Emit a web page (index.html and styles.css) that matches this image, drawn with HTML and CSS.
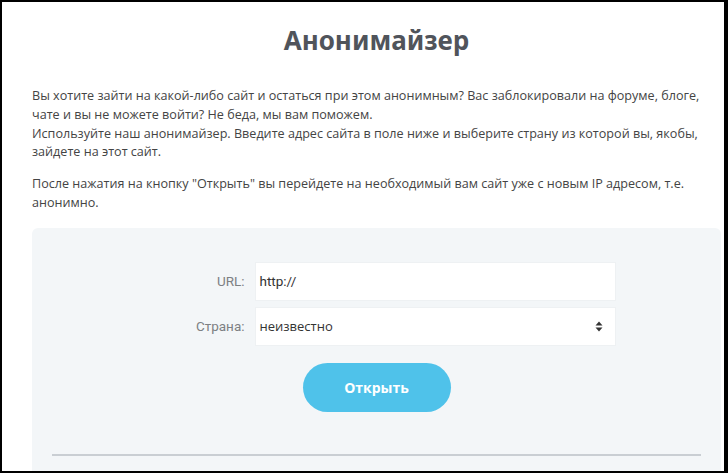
FILE: index.html
```html
<!DOCTYPE html>
<html lang="ru">
<head>
<meta charset="utf-8">
<title>Анонимайзер</title>
<link rel="stylesheet" href="styles.css">
</head>
<body>
<div class="page">
  <h1 class="title">Анонимайзер</h1>
  <div class="intro">
    <p>Вы хотите зайти на какой-либо сайт и остаться при этом анонимным? Вас заблокировали на форуме, блоге,<br>чате и вы не можете войти? Не беда, мы вам поможем.<br>Используйте наш анонимайзер. Введите адрес сайта в поле ниже и выберите страну из которой вы, якобы,<br>зайдете на этот сайт.</p>
    <p>После нажатия на кнопку "Открыть" вы перейдете на необходимый вам сайт уже с новым IP адресом, т.е.<br>анонимно.</p>
  </div>
  <div class="panel">
    <form class="form">
      <div class="row">
        <label class="label">URL:</label>
        <div class="field"><span class="field-text url">http://</span></div>
      </div>
      <div class="row">
        <label class="label">Страна:</label>
        <div class="field select">
          <span class="field-text country">неизвестно</span>
          <svg class="arrows" width="8" height="11" viewBox="0 0 8 11"><path d="M4 0.5 L7.5 4.5 H0.5 Z M4 10.5 L7.5 6.5 H0.5 Z" fill="#333"/></svg>
        </div>
      </div>
      <div class="actions"><span class="btn">Открыть</span></div>
    </form>
    <div class="divider"></div>
  </div>
</div>
</body>
</html>
```
FILE: styles.css
```css
* { box-sizing: border-box; }
html, body { margin: 0; padding: 0; height: 100%; }
body {
  background: #000;
  padding: 2px 4px 2px 2px;
}
.page {
  background: #fff;
  height: 100%;
  padding: 22px 3px 0 30px;
  display: flex;
  flex-direction: column;
  overflow: hidden;
}
.title {
  margin: 0;
  font-family: "Noto Sans", sans-serif;
  font-weight: 700;
  font-size: 26px;
  line-height: 32px;
  color: #50545b;
  text-align: center;
}
.intro {
  margin-top: 31px;
  font-family: "Open Sans", sans-serif;
  font-size: 12.6px;
  line-height: 18.8px;
  color: #444;
}
.intro p { margin: 0 0 13px 0; white-space: nowrap; }
.intro p:last-child { margin-bottom: 0; }
.panel {
  margin-top: 15px;
  flex: 1;
  background: #f3f6f8;
  border-radius: 6px 6px 0 0;
  padding: 34px 20px 0 20px;
}
.form {
  display: flex;
  flex-direction: column;
  gap: 6px;
  align-items: center;
}
.row {
  display: flex;
  align-items: center;
  gap: 10px;
  width: 478px;
}
.label {
  width: 107px;
  text-align: right;
  font-family: Roboto, sans-serif;
  font-size: 13.5px;
  color: #7d8083;
}
.field {
  width: 361px;
  height: 39px;
  background: #fff;
  border: 1px solid #eef1f3;
  display: flex;
  align-items: center;
  padding: 0 12px 0 4px;
}
.field-text { color: #333; font-size: 13px; }
.url { font-family: Roboto, sans-serif; font-size: 13.5px; }
.country { font-family: "Open Sans", sans-serif; font-weight: 500; }
.select { justify-content: space-between; }
.arrows { display: block; }
.actions { margin-top: 11px; }
.btn {
  display: flex;
  align-items: center;
  justify-content: center;
  width: 148px;
  height: 49px;
  border-radius: 25px;
  background: #4fc2ea;
  color: #fff;
  font-family: "Open Sans", sans-serif;
  font-weight: 700;
  font-size: 14px;
}
.divider {
  margin-top: 42px;
  height: 2px;
  background: #c9ced3;
}
```
